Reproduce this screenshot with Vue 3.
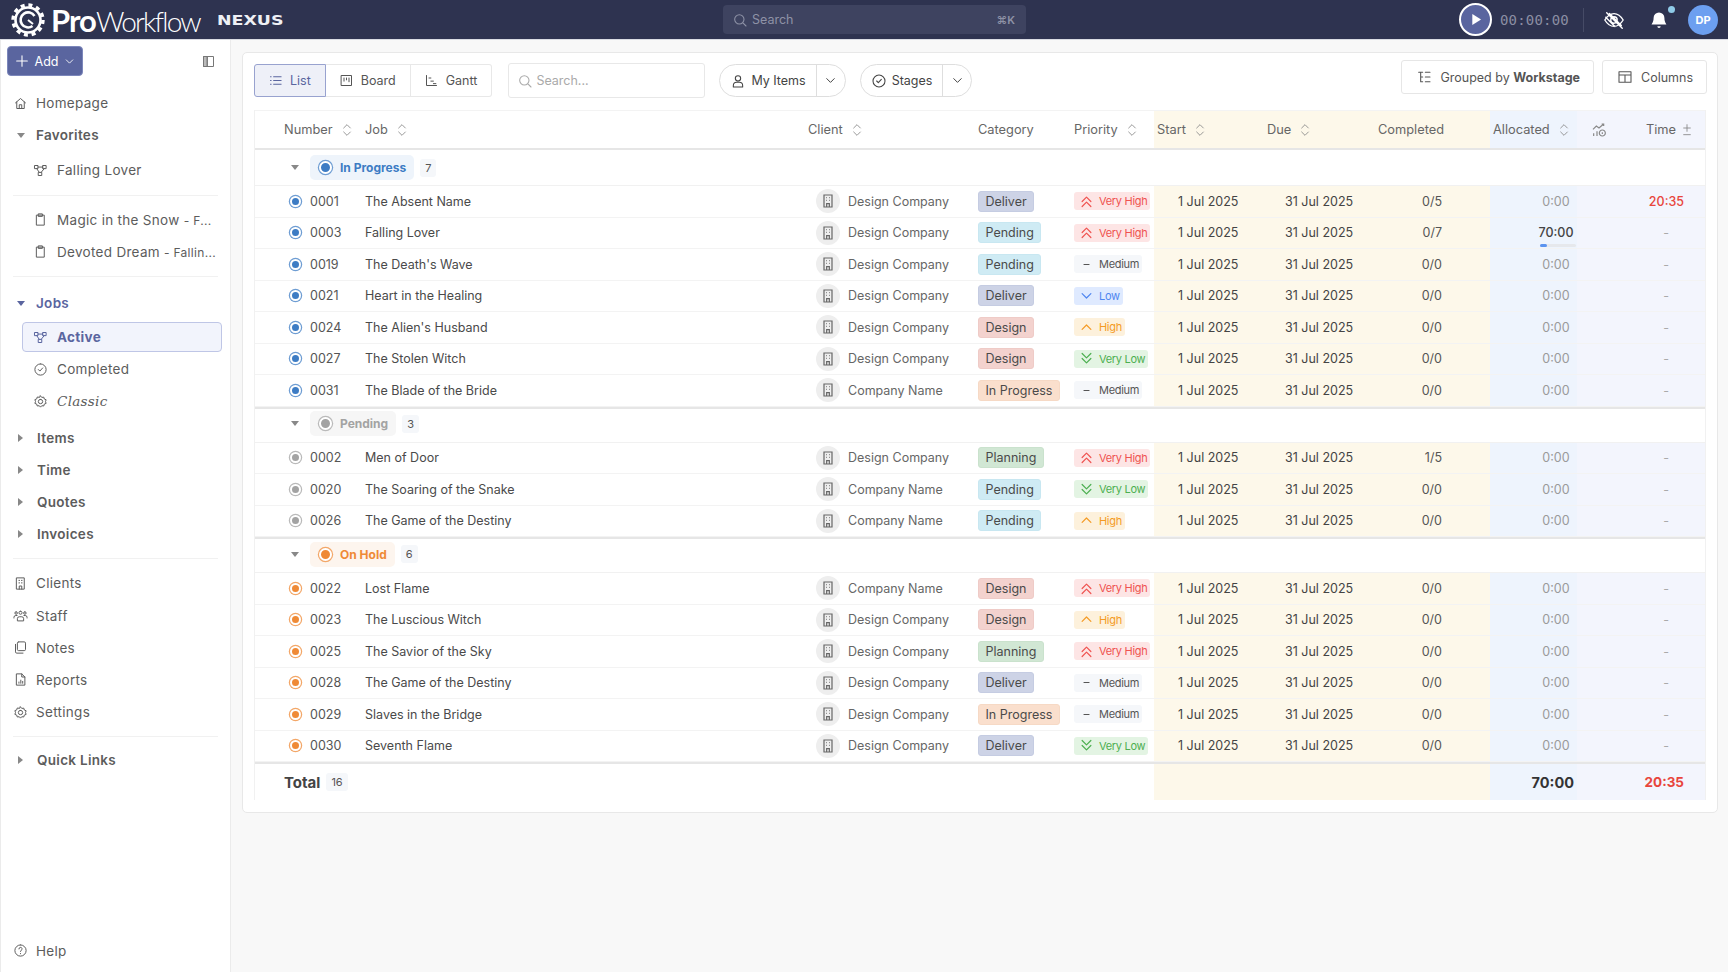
<script setup>
const icons = {
  home: 'M4 11l8-7 8 7M6 9.5V20h12V9.5M10 20v-6h4v6',
  list: 'M9 6h12M9 12h12M9 18h12M4 6h1M4 12h1M4 18h1',
  board: 'M4 4h16v16H4zM8 8v5M12 8v3M16 8v6',
  gantt: 'M4 4v16h16M8 8h3M11 13h4M15 17h4',
  search: 'M11 4a7 7 0 1 0 0 14a7 7 0 1 0 0-14M16 16l5 5',
  person: 'M12 4a4 4 0 1 0 0 8a4 4 0 1 0 0-8M5 21v-2a5 5 0 0 1 5-5h4a5 5 0 0 1 5 5v2z',
  check: 'M12 3a9 9 0 1 0 0 18a9 9 0 1 0 0-18M8.5 12l2.5 2.5l4.5-5',
  grouped: 'M4 5h6M7 5v14M7 12h3M7 19h3M14 5h7M14 12h7M14 19h7',
  columns: 'M3 4h18v16H3zM12 9v11M3 9h18',
  building: 'M6 3h12v18H6zM9.5 7h1M13.5 7h1M9.5 11h1M13.5 11h1M10 21v-5h4v5',
  node: 'M3 4h5v5H3zM16 4h5v5h-5zM9 15h5v5H9zM8 6.5h8M6 9l4 6M18 9l-5 6',
  clip: 'M6 5h12v16H6zM9 3h6v4H9z',
  gear: 'M12 8.5a3.5 3.5 0 1 0 0 7a3.5 3.5 0 1 0 0-7M12 3l2 2.5l3.2-.5l.8 3l3 1.2l-1 3l1 2.8l-3 1.2l-.8 3l-3.2-.5L12 21l-2-2.300l-3.200.5l-.8-3L3 15l1-3l-1-3l3-1.200l.8-3l3.200.5z',
  staff: 'M12 5a2.500 2.500 0 1 0 0 5a2.500 2.500 0 1 0 0-5M5 6a2 2 0 1 0 0 4a2 2 0 1 0 0-4M19 6a2 2 0 1 0 0 4a2 2 0 1 0 0-4M7 20v-3a3 3 0 0 1 3-3h4a3 3 0 0 1 3 3v3zM1.500 16v-1a3 3 0 0 1 3-3h2M22.500 16v-1a3 3 0 0 0-3-3h-2',
  notes: 'M9 3h9a2 2 0 0 1 2 2v10a2 2 0 0 1-2 2H9a2 2 0 0 1-2-2V5a2 2 0 0 1 2-2M4 7v12a2 2 0 0 0 2 2h10',
  report: 'M6 3h8l5 5v13H6zM14 3v5h5M9.500 18v-2M12.500 18v-5M15.500 18v-3',
  help: 'M12 3a9 9 0 1 0 0 18a9 9 0 1 0 0-18M9.500 9.500a2.500 2.500 0 1 1 3.500 2.300c-.7.4-1 .9-1 1.700M12 16.800v.4',
  panel: 'M4 4h16v16H4zM10 4v16',
  chart: 'M3 11l5-5l4 3l7-6M16 3h3v3M4 21v-4M9 21v-7M17 12a4.500 4.500 0 1 0 0 9a4.500 4.500 0 1 0 0-9M17 15.500v2.500',
  eyeoff: 'M2 12c3-5 6.500-7 10-7s7 2 10 7c-3 5-6.500 7-10 7s-7-2-10-7zM12 8.500a3.500 3.500 0 1 0 0 7a3.500 3.500 0 1 0 0-7M4 4l17 17M7 5l13 13M3 9l10 10',
  up1: 'M5 15l7-7l7 7',
  down1: 'M5 9l7 7l7-7',
  up2: 'M5 12l7-7l7 7M5 20l7-7l7 7',
  down2: 'M5 4l7 7l7-7M5 12l7 7l7-7',
  minus: 'M8 12h8',
  chev: 'M6 9l6 6l6-6',
  sort: 'M7 9l5-5l5 5M7 15l5 5l5-5',
  plusminus: 'M12 4v10M7 9h10M7 19h10',
  plus: 'M12 4v16M4 12h16'
}

const priorities = {
  VH: { label: 'Very High', icon: 'up2', cls: 'p-vh' },
  H: { label: 'High', icon: 'up1', cls: 'p-h' },
  M: { label: 'Medium', icon: 'minus', cls: 'p-m' },
  L: { label: 'Low', icon: 'down1', cls: 'p-l' },
  VL: { label: 'Very Low', icon: 'down2', cls: 'p-vl' }
}

const catClass = {
  Deliver: 'c-deliver',
  Pending: 'c-pending',
  Design: 'c-design',
  'In Progress': 'c-progress',
  Planning: 'c-planning'
}

const DC = 'Design Company'
const CN = 'Company Name'

const groups = [
  {
    name: 'In Progress', cls: 'st-blue',
    rows: [
      ['0001', 'The Absent Name', DC, 'Deliver', 'VH', '0/5', '0:00', '20:35'],
      ['0003', 'Falling Lover', DC, 'Pending', 'VH', '0/7', '70:00', '-'],
      ['0019', "The Death's Wave", DC, 'Pending', 'M', '0/0', '0:00', '-'],
      ['0021', 'Heart in the Healing', DC, 'Deliver', 'L', '0/0', '0:00', '-'],
      ['0024', "The Alien's Husband", DC, 'Design', 'H', '0/0', '0:00', '-'],
      ['0027', 'The Stolen Witch', DC, 'Design', 'VL', '0/0', '0:00', '-'],
      ['0031', 'The Blade of the Bride', CN, 'In Progress', 'M', '0/0', '0:00', '-']
    ]
  },
  {
    name: 'Pending', cls: 'st-grey',
    rows: [
      ['0002', 'Men of Door', DC, 'Planning', 'VH', '1/5', '0:00', '-'],
      ['0020', 'The Soaring of the Snake', CN, 'Pending', 'VL', '0/0', '0:00', '-'],
      ['0026', 'The Game of the Destiny', CN, 'Pending', 'H', '0/0', '0:00', '-']
    ]
  },
  {
    name: 'On Hold', cls: 'st-orange',
    rows: [
      ['0022', 'Lost Flame', CN, 'Design', 'VH', '0/0', '0:00', '-'],
      ['0023', 'The Luscious Witch', DC, 'Design', 'H', '0/0', '0:00', '-'],
      ['0025', 'The Savior of the Sky', DC, 'Planning', 'VH', '0/0', '0:00', '-'],
      ['0028', 'The Game of the Destiny', DC, 'Deliver', 'M', '0/0', '0:00', '-'],
      ['0029', 'Slaves in the Bridge', DC, 'In Progress', 'M', '0/0', '0:00', '-'],
      ['0030', 'Seventh Flame', DC, 'Deliver', 'VL', '0/0', '0:00', '-']
    ]
  }
]

const sideBottom = [
  { label: 'Clients', icon: 'building' },
  { label: 'Staff', icon: 'staff' },
  { label: 'Notes', icon: 'notes' },
  { label: 'Reports', icon: 'report' },
  { label: 'Settings', icon: 'gear' }
]
</script>

<template>
  <div class="app">
    <header class="topbar">
      <div class="logo">
        <svg class="gear" viewBox="0 0 36 36">
          <circle cx="18" cy="18" r="12.500" fill="none" stroke="#fff" stroke-width="2.600" />
          <circle cx="18" cy="18" r="15" fill="none" stroke="#fff" stroke-width="3.400" stroke-dasharray="4 3.850" />
          <path d="M24.500 14a7.500 7.500 0 1 0-2 10" fill="none" stroke="#fff" stroke-width="2.600" />
          <path d="M18 18l5 4" stroke="#fff" stroke-width="2" />
        </svg>
        <span class="brand"><b>Pro</b>Workflow</span>
        <span class="nexus">NEXUS</span>
      </div>
      <div class="top-search">
        <svg class="ic" viewBox="0 0 24 24"><path :d="icons.search" /></svg>
        <span>Search</span>
        <span class="kbd">⌘K</span>
      </div>
      <div class="top-right">
        <span class="play">
          <svg viewBox="0 0 24 24"><path d="M8 5l11 7l-11 7z" fill="#fff" /></svg>
        </span>
        <span class="timer">00:00:00</span>
        <span class="top-div"></span>
        <svg class="eye" viewBox="0 0 24 24"><path :d="icons.eyeoff" /></svg>
        <span class="bell">
          <svg viewBox="0 0 24 24"><path d="M12 3a6.500 6.500 0 0 0-6.500 6.500c0 5-2 6.500-2.500 8h18c-.5-1.500-2.500-3-2.500-8A6.500 6.500 0 0 0 12 3zM10 19.500a2 2 0 0 0 4 0z" fill="#fff" /></svg>
          <i class="bell-dot"></i>
        </span>
        <span class="avatar">DP</span>
      </div>
    </header>

    <div class="body">
      <aside class="side">
        <div class="add-row">
          <button class="add-btn">
            <svg class="ic" viewBox="0 0 24 24"><path :d="icons.plus" /></svg>
            Add
            <svg class="ic small" viewBox="0 0 24 24"><path :d="icons.chev" /></svg>
          </button>
          <svg class="panel" viewBox="0 0 24 24"><path d="M4 4h6v16H4z" fill="#bbb" /><path :d="icons.panel" /></svg>
        </div>

        <a class="item"><svg class="ic" viewBox="0 0 24 24"><path :d="icons.home" /></svg>Homepage</a>
        <a class="item head"><i class="tri down"></i>Favorites</a>
        <a class="item sub first-sub"><svg class="ic" viewBox="0 0 24 24"><path :d="icons.node" /></svg>Falling Lover</a>
        <div class="divider"></div>
        <a class="item sub"><svg class="ic" viewBox="0 0 24 24"><path :d="icons.clip" /></svg><span>Magic in the Snow <small>- F...</small></span></a>
        <a class="item sub"><svg class="ic" viewBox="0 0 24 24"><path :d="icons.clip" /></svg><span>Devoted Dream <small>- Fallin...</small></span></a>
        <div class="divider before-jobs"></div>
        <a class="item head jobs"><i class="tri down"></i>Jobs</a>
        <a class="item sub active"><svg class="ic" viewBox="0 0 24 24"><path :d="icons.node" /></svg>Active</a>
        <a class="item sub"><svg class="ic" viewBox="0 0 24 24"><path :d="icons.check" /></svg>Completed</a>
        <a class="item sub classic"><svg class="ic" viewBox="0 0 24 24"><path :d="icons.gear" /></svg>Classic</a>
        <a class="item head items-head"><i class="tri"></i>Items</a>
        <a class="item head"><i class="tri"></i>Time</a>
        <a class="item head"><i class="tri"></i>Quotes</a>
        <a class="item head"><i class="tri"></i>Invoices</a>
        <div class="divider"></div>
        <a v-for="s in sideBottom" :key="s.label" class="item">
          <svg class="ic" viewBox="0 0 24 24"><path :d="icons[s.icon]" /></svg>{{ s.label }}
        </a>
        <div class="divider before-quick"></div>
        <a class="item head"><i class="tri"></i>Quick Links</a>
        <a class="item help"><svg class="ic" viewBox="0 0 24 24"><path :d="icons.help" /></svg>Help</a>
      </aside>

      <main class="main">
        <section class="card">
          <div class="toolbar">
            <div class="tabs">
              <span class="tab on"><svg class="ic" viewBox="0 0 24 24"><path :d="icons.list" /></svg>List</span>
              <span class="tab"><svg class="ic" viewBox="0 0 24 24"><path :d="icons.board" /></svg>Board</span>
              <span class="tab"><svg class="ic" viewBox="0 0 24 24"><path :d="icons.gantt" /></svg>Gantt</span>
            </div>
            <div class="tsearch">
              <svg class="ic" viewBox="0 0 24 24"><path :d="icons.search" /></svg>Search...
            </div>
            <div class="split items">
              <span class="split-main"><svg class="ic" viewBox="0 0 24 24"><path :d="icons.person" /></svg>My Items</span>
              <span class="split-arrow"><svg class="ic" viewBox="0 0 24 24"><path :d="icons.chev" /></svg></span>
            </div>
            <div class="split stages">
              <span class="split-main"><svg class="ic" viewBox="0 0 24 24"><path :d="icons.check" /></svg>Stages</span>
              <span class="split-arrow"><svg class="ic" viewBox="0 0 24 24"><path :d="icons.chev" /></svg></span>
            </div>
            <div class="tools">
              <span class="tool"><svg class="ic" viewBox="0 0 24 24"><path :d="icons.grouped" /></svg>Grouped by&nbsp;<b>Workstage</b></span>
              <span class="tool"><svg class="ic" viewBox="0 0 24 24"><path :d="icons.columns" /></svg>Columns</span>
            </div>
          </div>

          <div class="table">
            <div class="row thead">
              <div class="cell col-num">Number<svg class="sort" viewBox="0 0 24 24"><path :d="icons.sort" /></svg></div>
              <div class="cell">Job<svg class="sort" viewBox="0 0 24 24"><path :d="icons.sort" /></svg></div>
              <div class="cell">Client<svg class="sort" viewBox="0 0 24 24"><path :d="icons.sort" /></svg></div>
              <div class="cell pad1">Category</div>
              <div class="cell">Priority<svg class="sort" viewBox="0 0 24 24"><path :d="icons.sort" /></svg></div>
              <div class="cell cream pad3">Start<svg class="sort" viewBox="0 0 24 24"><path :d="icons.sort" /></svg></div>
              <div class="cell cream">Due<svg class="sort" viewBox="0 0 24 24"><path :d="icons.sort" /></svg></div>
              <div class="cell cream">Completed</div>
              <div class="cell blue pad3">Allocated<svg class="sort" viewBox="0 0 24 24"><path :d="icons.sort" /></svg></div>
              <div class="cell lav th-time">
                <svg class="chart" viewBox="0 0 24 24"><path :d="icons.chart" /></svg>
                <span class="th-time-label">Time<svg class="sort" viewBox="0 0 24 24"><path :d="icons.plusminus" /></svg></span>
              </div>
            </div>

            <div v-for="g in groups" :key="g.name" class="group" :class="g.cls">
              <div class="group-row">
                <i class="tri down"></i>
                <span class="pill"><i class="dot big"></i>{{ g.name }}</span>
                <span class="chip">{{ g.rows.length }}</span>
              </div>
              <div v-for="r in g.rows" :key="r[0]" class="row body-row">
                <div class="cell col-lead"><i class="dot"></i>{{ r[0] }}</div>
                <div class="cell job">{{ r[1] }}</div>
                <div class="cell client">
                  <span class="cl-ic"><svg viewBox="0 0 24 24"><path :d="icons.building" /></svg></span>{{ r[2] }}
                </div>
                <div class="cell pad1"><span class="tag" :class="catClass[r[3]]">{{ r[3] }}</span></div>
                <div class="cell">
                  <span class="prio" :class="priorities[r[4]].cls">
                    <svg viewBox="0 0 24 24"><path :d="icons[priorities[r[4]].icon]" /></svg>{{ priorities[r[4]].label }}
                  </span>
                </div>
                <div class="cell cream d1">1 Jul 2025</div>
                <div class="cell cream d2">31 Jul 2025</div>
                <div class="cell cream done">{{ r[5] }}</div>
                <div class="cell blue alloc" :class="{ has: r[6] !== '0:00' }">
                  {{ r[6] }}
                  <span v-if="r[6] !== '0:00'" class="bar"><i></i></span>
                </div>
                <div class="cell lav time" :class="{ over: r[7] !== '-' }">{{ r[7] }}</div>
              </div>
            </div>

            <div class="row total">
              <div class="cell total-label">Total<span class="chip">16</span></div>
              <div class="cell"></div>
              <div class="cell"></div>
              <div class="cell"></div>
              <div class="cell"></div>
              <div class="cell cream"></div>
              <div class="cell cream"></div>
              <div class="cell cream"></div>
              <div class="cell blue total-alloc">70:00</div>
              <div class="cell lav total-time">20:35</div>
            </div>
          </div>
        </section>
      </main>
    </div>
  </div>
</template>

<style>
html, body {
  margin: 0;
  background: #f8f8f8;
}
</style>

<style scoped>
.app {
  height: 972px;
  display: flex;
  flex-direction: column;
  overflow: hidden;
  font-family: Inter, "Liberation Sans", sans-serif;
  font-size: 12.500px;
  color: #555;
}

svg {
  display: block;
  flex: none;
}

.ic {
  width: 16px;
  height: 16px;
  fill: none;
  stroke: currentColor;
  stroke-width: 1.600;
  stroke-linecap: round;
  stroke-linejoin: round;
}

/* top bar */
.topbar {
  height: 39px;
  flex: none;
  background: #2e3350;
  border-bottom: 1px solid #d9dbe3;
  display: flex;
  align-items: center;
  position: relative;
}

.logo {
  display: flex;
  align-items: center;
  margin-left: 10px;
  color: #fff;
  width: 713px;
}

.gear {
  width: 36px;
  height: 36px;
}

.brand {
  font-family: Lato, "Open Sans", sans-serif;
  font-size: 28px;
  font-weight: 300;
  letter-spacing: -1.800px;
  margin-left: 5px;
}

.brand b {
  font-size: 31px;
  font-weight: 700;
  letter-spacing: -1px;
}

.nexus {
  font-family: "DejaVu Sans", sans-serif;
  font-weight: 700;
  font-size: 14.500px;
  margin-left: 17px;
  color: #eef0f5;
  transform: scaleX(1.200);
  transform-origin: left center;
}

.top-search {
  width: 303px;
  height: 29px;
  box-sizing: border-box;
  background: #3e4360;
  border-radius: 4px;
  display: flex;
  align-items: center;
  gap: 4px;
  padding: 0 11px 0 9px;
  color: #8e92a6;
}

.kbd {
  margin-left: auto;
  font-size: 11px;
  font-weight: 600;
}

.top-right {
  margin-left: auto;
  display: flex;
  align-items: center;
  padding-right: 10px;
}

.play {
  width: 29px;
  height: 29px;
  border: 2px solid #fff;
  border-radius: 50%;
  background: #5a659f;
  display: flex;
  align-items: center;
  justify-content: center;
}

.play svg {
  width: 19px;
  height: 19px;
}

.timer {
  font-family: "DejaVu Sans Mono", monospace;
  font-size: 14px;
  letter-spacing: 0.200px;
  margin-left: 8px;
  color: #8b8ea3;
}

.top-div {
  width: 1px;
  height: 24px;
  background: #464b66;
  margin-left: 14px;
}

.eye {
  width: 22px;
  height: 22px;
  margin-left: 19px;
  fill: none;
  stroke: #fff;
  stroke-width: 1.500;
  stroke-linecap: round;
}

.bell {
  position: relative;
  margin-left: 24px;
}

.bell svg {
  width: 20px;
  height: 20px;
}

.bell-dot {
  position: absolute;
  top: -4px;
  right: -6px;
  width: 7px;
  height: 7px;
  border-radius: 50%;
  background: #8fcbe8;
}

.avatar {
  width: 30px;
  height: 30px;
  margin-left: 19px;
  border-radius: 50%;
  background: #6c9ff0;
  color: #fff;
  font-size: 11px;
  font-weight: 700;
  display: flex;
  align-items: center;
  justify-content: center;
}

.body {
  flex: 1;
  display: flex;
  min-height: 0;
}

/* sidebar */
.side {
  width: 231px;
  flex: none;
  box-sizing: border-box;
  background: #fff;
  border-right: 1px solid #ebebeb;
  border-left: 1px solid #ebebeb;
  padding: 6px 8px 5px 7px;
  display: flex;
  flex-direction: column;
  font-size: 13.500px;
  letter-spacing: 0.300px;
}

.add-row {
  display: flex;
  align-items: center;
  justify-content: space-between;
  margin-bottom: 11px;
  padding-right: 6px;
}

.add-btn {
  width: 76px;
  height: 30px;
  margin-left: -1px;
  border: 1px solid #7c87bb;
  border-radius: 4px;
  background: #5a659f;
  color: #fff;
  font: 400 12.500px Inter, sans-serif;
  display: flex;
  align-items: center;
  justify-content: center;
  gap: 5px;
  padding: 0;
}

.add-btn .small {
  width: 13px;
  height: 13px;
}

.panel {
  width: 15px;
  height: 15px;
  fill: none;
  stroke: #777;
  stroke-width: 1.600;
}

.item {
  height: 32.200px;
  flex: none;
  display: flex;
  align-items: center;
  gap: 8px;
  padding-left: 5px;
  color: #5c5c5c;
  white-space: nowrap;
}

.item .ic {
  width: 15px;
  height: 15px;
  color: #5e5e5e;
}

.head {
  font-weight: 600;
  gap: 0;
  padding-left: 0;
}

.tri {
  width: 0;
  height: 0;
  margin: 0 14px 0 10px;
  border-left: 5px solid #888;
  border-top: 4px solid transparent;
  border-bottom: 4px solid transparent;
}

.tri.down {
  margin: 0 11px 0 9px;
  border-left: 4px solid transparent;
  border-right: 4px solid transparent;
  border-top: 5px solid #888;
  border-bottom: 0;
}

.head .tri.down {
  margin-right: 11px;
}

.sub {
  margin-left: 25px;
  padding-left: 0;
}

.sub .ic {
  margin-right: 1px;
}

.first-sub {
  margin-top: 3px;
}

.sub small {
  font-size: 12px;
}

.divider {
  height: 1px;
  flex: none;
  background: #f1f1f1;
  margin: 8px 4px 8px 5px;
}

.before-jobs {
  margin-bottom: 10px;
}

.before-quick {
  margin-bottom: 7px;
}

.jobs {
  color: #5a659f;
}

.jobs .tri.down {
  border-top-color: #5a659f;
}

.active {
  height: 30px;
  margin: 3px 0 1px 14px;
  padding-left: 10px;
  box-sizing: border-box;
  background: #f2f4fc;
  border: 1px solid #bfc6e6;
  border-radius: 4px;
  color: #5a659f;
  font-weight: 700;
  width: 200px;
}

.active .ic {
  color: #5a659f;
}

.classic {
  font-family: "DejaVu Serif", serif;
  font-style: italic;
}

.items-head {
  margin-top: 4px;
}

.help {
  margin-top: auto;
}

/* main */
.main {
  flex: 1;
  min-width: 0;
  padding: 12px 10px 0 11px;
}

.card {
  height: 761px;
  box-sizing: border-box;
  background: #fff;
  border: 1px solid #e8e8e8;
  border-radius: 5px;
  padding: 7px 11px 0 11px;
}

.toolbar {
  height: 50px;
  display: flex;
  align-items: flex-start;
}

.tabs {
  display: flex;
  height: 33px;
  margin-top: 4px;
}

.tab {
  display: flex;
  align-items: center;
  gap: 7px;
  padding: 0 14px 0 13px;
  border: 1px solid #e8e8e8;
  border-left: 0;
  color: #555;
}

.tab:last-child {
  border-radius: 0 3px 3px 0;
}

.tab .ic {
  width: 15px;
  height: 15px;
}

.tab.on {
  border: 1px solid #98a2cf;
  border-radius: 3px 0 0 3px;
  background: #eef0f8;
  color: #5a659f;
}

.tsearch {
  width: 197px;
  height: 35px;
  box-sizing: border-box;
  margin: 3px 0 0 16px;
  border: 1px solid #e8e8e8;
  border-radius: 3px;
  display: flex;
  align-items: center;
  gap: 3px;
  padding-left: 8px;
  color: #aaa;
}

.split {
  height: 33px;
  box-sizing: border-box;
  margin: 4px 0 0 14px;
  border: 1px solid #dedede;
  border-radius: 17px;
  display: flex;
  align-items: center;
  color: #444;
}

.split-main {
  display: flex;
  align-items: center;
  gap: 5px;
  padding: 0 10px;
  height: 100%;
  border-right: 1px solid #dedede;
}

.split-arrow {
  padding: 0 6.500px;
}

.split-arrow .ic {
  width: 15px;
  height: 15px;
}

.tools {
  margin-left: auto;
  display: flex;
  gap: 8px;
  margin-right: -1px;
}

.tool {
  height: 34px;
  box-sizing: border-box;
  padding: 0 13px 0 14px;
  border: 1px solid #e6e6e6;
  border-radius: 3px;
  display: flex;
  align-items: center;
  color: #555;
}

.tool .ic {
  margin-right: 8px;
}

.table {
  border-left: 1px solid #f1f1f1;
  border-right: 1px solid #f1f1f1;
}

.row {
  display: grid;
  grid-template-columns: 110px 443px 169px 97px 80px 113px 111px 112px 87px 1fr;
}

.cell {
  display: flex;
  align-items: center;
  min-width: 0;
  white-space: nowrap;
}

.cream {
  background: #fdf8ea;
}

.blue {
  background: #eef4fd;
}

.lav {
  background: #f3f5fd;
}

.thead {
  height: 37px;
  border-bottom: 2px solid #e6e6e6;
  border-top: 1px solid #f3f3f3;
  color: #666;
  font-size: 12.800px;
}

.col-num {
  padding-left: 29px;
}

.pad3 {
  padding-left: 3px;
}

.pad1 {
  padding-left: 1px;
}

.sort {
  width: 16px;
  height: 16px;
  margin-left: 6px;
  fill: none;
  stroke: #888;
  stroke-width: 1.300;
  stroke-linecap: round;
  stroke-linejoin: round;
}

.th-time {
  justify-content: space-between;
  padding: 0 10px 0 14px;
}

.th-time-label {
  display: flex;
  align-items: center;
}

.th-time-label .sort {
  margin-left: 3px;
}

.chart {
  width: 16px;
  height: 16px;
  fill: none;
  stroke: #888;
  stroke-width: 1.800;
}

.group-row {
  height: 36px;
  box-sizing: border-box;
  display: flex;
  align-items: center;
  border-bottom: 1px solid #f1f1f1;
  padding-left: 32px;
  background: #fff;
}

.group + .group .group-row {
  border-top: 2px solid #e6e6e6;
  padding-bottom: 3px;
}

.group-row .tri {
  margin: 0 11px 0 4px;
}

.pill {
  height: 25px;
  display: flex;
  align-items: center;
  gap: 8px;
  padding: 0 8px;
  border-radius: 5px;
  font-size: 12px;
  font-weight: 700;
}

.chip {
  margin-left: 6px;
  padding: 0 5px;
  height: 18px;
  line-height: 18px;
  border-radius: 3px;
  background: #f5f7fa;
  font-size: 11px;
  font-weight: 400;
  color: #555;
}

.dot {
  flex: none;
  border-radius: 50%;
  background: var(--st);
  border: 2px solid #fff;
  box-shadow: 0 0 0 1.200px color-mix(in srgb, var(--st) 75%, white);
  margin: 0 9px 0 1px;
  box-sizing: content-box;
  width: 7px;
  height: 7px;
}

.dot.big {
  width: 9px;
  height: 9px;
  margin: 0 0 0 1px;
}

.st-blue {
  --st: #3d7cc4;
}

.st-blue .pill {
  background: #eef4fb;
  color: #3d7cc4;
}

.st-grey {
  --st: #a3a3a3;
}

.st-grey .pill {
  background: #f6f6f6;
  color: #a3a3a3;
}

.st-orange {
  --st: #ef8a36;
}

.st-orange .pill {
  background: #fdf5ee;
  color: #ef8a36;
}

.body-row {
  height: 31.500px;
  box-sizing: border-box;
  border-bottom: 1px solid #f3f3f3;
}

.col-lead {
  padding-left: 34px;
  color: #555;
}

.job {
  color: #4a4a4a;
}

.client {
  padding-left: 8px;
  color: #666;
}

.cl-ic {
  width: 24px;
  height: 24px;
  border-radius: 50%;
  background: #eeeeee;
  margin-right: 8px;
  display: flex;
  align-items: center;
  justify-content: center;
}

.cl-ic svg {
  width: 16px;
  height: 16px;
  fill: none;
  stroke: #666;
  stroke-width: 1.800;
}

.tag {
  height: 21px;
  box-sizing: border-box;
  line-height: 19px;
  padding: 0 6.500px;
  border-radius: 3px;
  border: 1px solid transparent;
  color: #4a4a4a;
}

.c-deliver {
  background: #cdd3e6;
  border-color: #c5cce2;
}

.c-pending {
  background: #cfebf4;
  border-color: #c8e7f1;
}

.c-design {
  background: #f3d2ce;
  border-color: #efcbc7;
}

.c-progress {
  background: #fadfcd;
  border-color: #f6d9c5;
}

.c-planning {
  background: #d1e7d4;
  border-color: #cae2cd;
}

.prio {
  height: 18px;
  display: flex;
  align-items: center;
  gap: 5px;
  padding: 0 3px 0 5px;
  border-radius: 3px;
  font-size: 11px;
  letter-spacing: -0.300px;
}

.prio svg {
  width: 15px;
  height: 15px;
  fill: none;
  stroke: currentColor;
  stroke-width: 1.900;
  stroke-linecap: round;
  stroke-linejoin: round;
}

.p-vh {
  background: #fde5e5;
  color: #ef5350;
}

.p-h {
  background: #fdf1dc;
  color: #f49b25;
}

.p-m {
  background: #f5f7fa;
  color: #555;
}

.p-l {
  background: #dfeaff;
  color: #4f86f0;
}

.p-vl {
  background: #e3f4e3;
  color: #4caf50;
}

.d1 {
  padding-left: 24px;
  color: #444;
}

.d2 {
  padding-left: 18px;
  color: #444;
}

.done {
  justify-content: flex-end;
  padding-right: 48px;
  color: #555;
}

.alloc {
  justify-content: center;
  padding-left: 45px;
  color: #9a9a9a;
  position: relative;
}

.alloc.has {
  color: #444;
  font-weight: 500;
}

.bar {
  position: absolute;
  left: 50px;
  right: 1px;
  bottom: 1px;
  height: 3px;
  background: #e6e8ec;
  border-radius: 2px;
}

.bar i {
  display: block;
  width: 7px;
  height: 3px;
  background: #5b93ef;
  border-radius: 2px;
}

.time {
  justify-content: flex-end;
  padding-right: 36px;
  color: #aaa;
}

.time.over {
  padding-right: 21px;
  color: #e8453c;
  font-weight: 500;
}

.total {
  height: 38px;
  box-sizing: border-box;
  border-top: 2px solid #e6e6e6;
}

.total-label {
  padding-left: 29px;
  font-size: 15px;
  font-weight: 700;
  color: #444;
}

.total-alloc {
  justify-content: flex-end;
  padding-right: 3px;
  font-size: 14.500px;
  font-weight: 700;
  color: #333;
}

.total-time {
  justify-content: flex-end;
  padding-right: 21px;
  font-size: 13.500px;
  font-weight: 700;
  color: #e8453c;
}
</style>
